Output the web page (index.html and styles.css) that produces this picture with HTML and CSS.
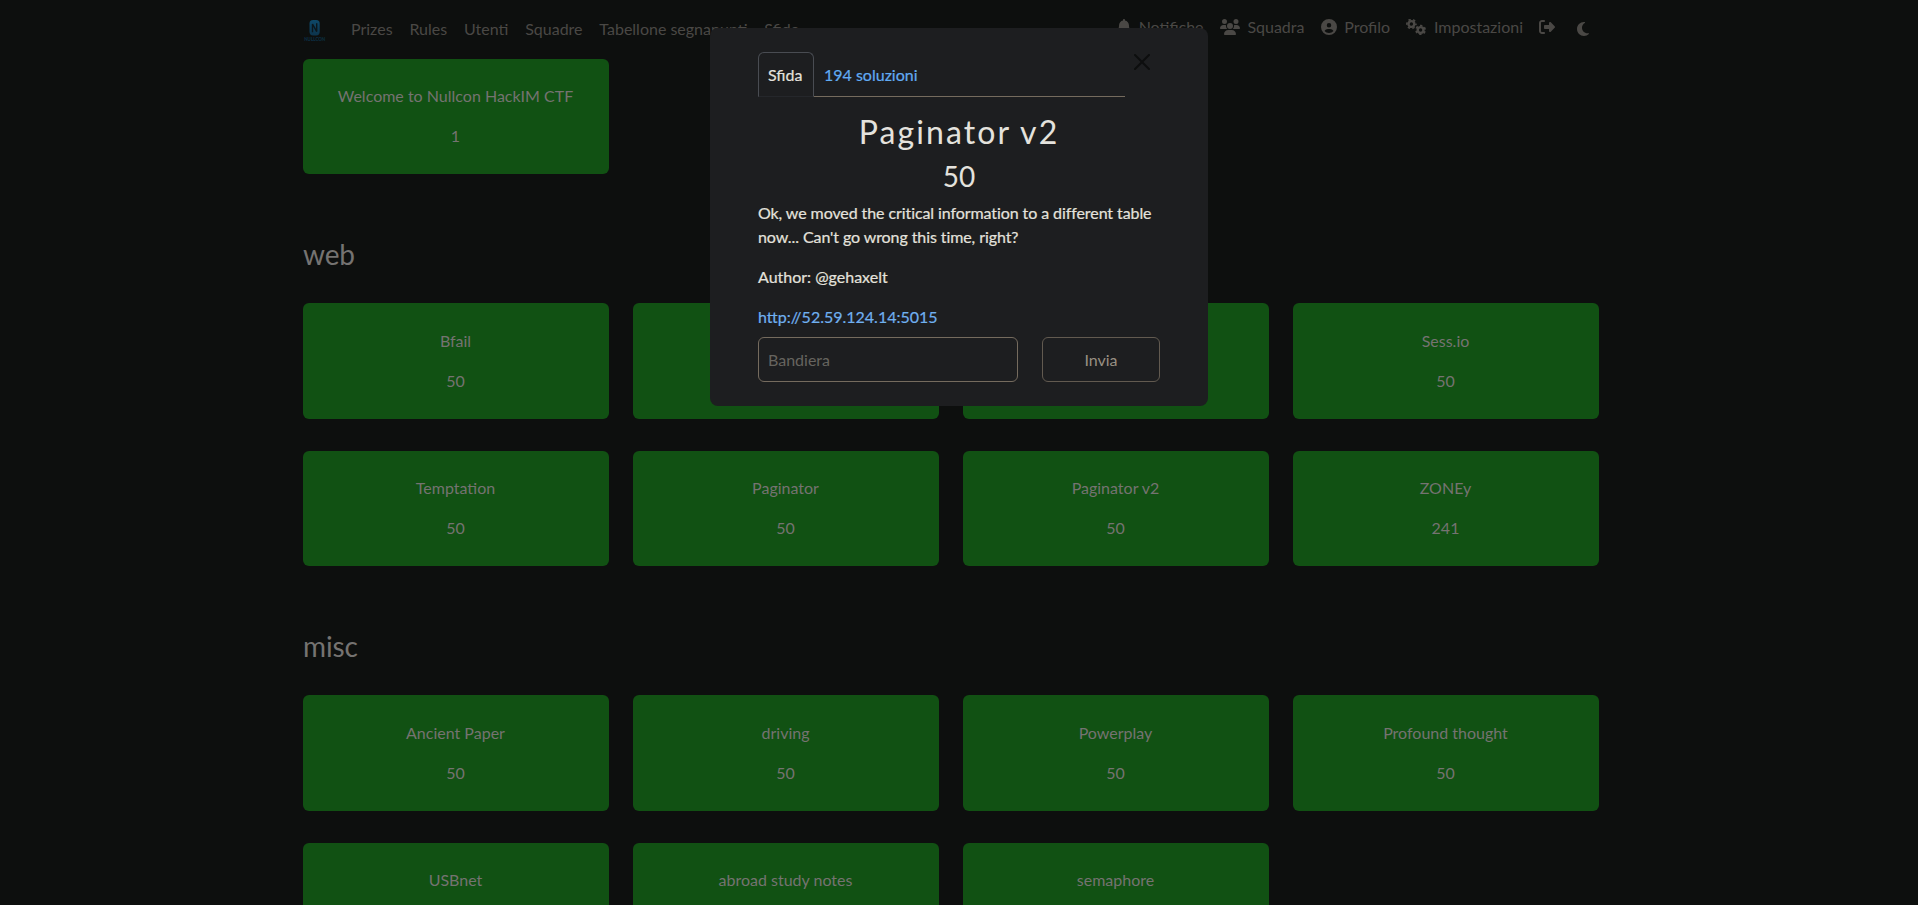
FILE: index.html
```html
<!DOCTYPE html>
<html lang="it">
<head>
<meta charset="utf-8">
<title>Sfide</title>
<link rel="stylesheet" href="styles.css">
</head>
<body>
<nav class="navbar">
  <svg class="logo" viewBox="0 0 24 24">
    <defs><linearGradient id="blue" x1="0" y1="0" x2="0" y2="1"><stop offset="0" stop-color="#0e4868"/><stop offset="1" stop-color="#0d344c"/></linearGradient></defs>
    <rect x="6.500" y="1" width="10.200" height="15.400" rx="3.600" fill="url(#blue)"/>
    <path d="M9.500 13.200V5L13.700 12.600V4.300" fill="none" stroke="#0c161b" stroke-width="1.400"/>
    <text x="11.700" y="22" text-anchor="middle" textLength="21" lengthAdjust="spacingAndGlyphs" class="logo-text">NULLCON</text>
  </svg>
  <div class="links">
    <a>Prizes</a><a>Rules</a><a>Utenti</a><a>Squadre</a><a>Tabellone segnapunti</a><a>Sfide</a>
  </div>
  <div class="account">
    <a><svg class="bell" viewBox="0 0 448 512"><path d="M224 0c-17.700 0-32 14.300-32 32V51.200C119 66 64 130.600 64 208v18.800c0 47-17.300 92.400-48.500 127.600l-7.400 8.300c-8.400 9.400-10.400 22.900-5.300 34.400S19.400 416 32 416H416c12.600 0 24-7.400 29.200-18.900s3.100-25-5.300-34.400l-7.400-8.300C401.300 319.200 384 273.900 384 226.800V208c0-77.400-55-142-128-156.800V32c0-17.700-14.300-32-32-32z"/></svg>Notifiche</a>
    <a><svg class="wide" viewBox="0 0 640 512"><path d="M144 0a80 80 0 1 1 0 160A80 80 0 1 1 144 0zM512 0a80 80 0 1 1 0 160A80 80 0 1 1 512 0zM0 298.700C0 239.800 47.800 192 106.700 192h42.700c15.900 0 31 3.500 44.600 9.700c-1.300 7.200-1.900 14.700-1.900 22.300c0 38.200 16.800 72.500 43.300 96H21.300C9.600 320 0 310.400 0 298.700zM405.300 320c26-23.500 42.700-57.800 42.700-96c0-7.600-.7-15-1.900-22.300c13.600-6.300 28.700-9.700 44.600-9.700h42.700C592.200 192 640 239.800 640 298.700c0 11.800-9.600 21.300-21.300 21.300H405.300zM224 224a96 96 0 1 1 192 0 96 96 0 1 1 -192 0zM128 485.300C128 411.700 187.700 352 261.300 352H378.700C452.300 352 512 411.700 512 485.300c0 14.700-11.900 26.700-26.700 26.700H154.700c-14.700 0-26.700-11.900-26.700-26.700z"/></svg>Squadra</a>
    <a><svg viewBox="0 0 512 512"><path d="M399 384.200C376.900 345.800 335.400 320 288 320H224c-47.400 0-88.900 25.800-111 64.200c35.200 39.200 86.200 63.800 143 63.800s107.800-24.700 143-63.800zM0 256a256 256 0 1 1 512 0A256 256 0 1 1 0 256zm256 16a72 72 0 1 0 0-144 72 72 0 1 0 0 144z"/></svg>Profilo</a>
    <a><svg class="wide" viewBox="0 0 20 16">
      <g fill="none" stroke="currentColor">
        <circle cx="5.400" cy="5" r="2.900" stroke-width="2.400"/>
        <circle cx="5.400" cy="5" r="4.500" stroke-width="1.700" stroke-dasharray="2.350 2.362" stroke-dashoffset="1.170"/>
        <circle cx="14.600" cy="11" r="2.900" stroke-width="2.400"/>
        <circle cx="14.600" cy="11" r="4.500" stroke-width="1.700" stroke-dasharray="2.350 2.362" stroke-dashoffset="3.500"/>
      </g></svg>Impostazioni</a>
    <a><svg class="exit" viewBox="0 0 512 512"><path d="M377.900 105.900L500.700 228.700c7.200 7.200 11.300 17.100 11.300 27.300s-4.100 20.100-11.300 27.300L377.900 406.100c-6.400 6.400-15 9.900-24 9.900c-18.700 0-33.900-15.200-33.900-33.900l0-62.100-128 0c-17.700 0-32-14.300-32-32l0-64c0-17.700 14.300-32 32-32l128 0 0-62.100c0-18.700 15.200-33.900 33.900-33.900c9 0 17.600 3.600 24 9.900zM160 96L96 96c-17.700 0-32 14.300-32 32l0 256c0 17.700 14.300 32 32 32l64 0c17.700 0 32 14.300 32 32s-14.300 32-32 32l-64 0c-53 0-96-43-96-96L0 128C0 75 43 32 96 32l64 0c17.700 0 32 14.300 32 32s-14.300 32-32 32z"/></svg></a>
    <a><svg class="moon" viewBox="0 0 384 512"><path d="M223.500 32C100 32 0 132.300 0 256S100 480 223.500 480c60.600 0 115.500-24.200 155.800-63.400c5-4.900 6.300-12.500 3.100-18.700s-10.100-9.700-17-8.500c-9.800 1.700-19.800 2.600-30.100 2.600c-96.900 0-175.500-78.800-175.500-176c0-65.800 36-123.100 89.300-153.300c6.100-3.500 9.200-10.500 7.700-17.300s-7.300-11.900-14.300-12.500c-6.300-.5-12.600-.8-19-.8z"/></svg></a>
  </div>
</nav>

<main class="container">
  <section class="category">
    <div class="grid">
      <div class="card"><p>Welcome to Nullcon HackIM CTF</p><p>1</p></div>
    </div>
  </section>
  <section class="category">
    <h3>web</h3>
    <div class="grid">
      <div class="card"><p>Bfail</p><p>50</p></div>
      <div class="card"></div>
      <div class="card"></div>
      <div class="card"><p>Sess.io</p><p>50</p></div>
      <div class="card"><p>Temptation</p><p>50</p></div>
      <div class="card"><p>Paginator</p><p>50</p></div>
      <div class="card"><p>Paginator v2</p><p>50</p></div>
      <div class="card"><p>ZONEy</p><p>241</p></div>
    </div>
  </section>
  <section class="category">
    <h3>misc</h3>
    <div class="grid">
      <div class="card"><p>Ancient Paper</p><p>50</p></div>
      <div class="card"><p>driving</p><p>50</p></div>
      <div class="card"><p>Powerplay</p><p>50</p></div>
      <div class="card"><p>Profound thought</p><p>50</p></div>
      <div class="card"><p>USBnet</p></div>
      <div class="card"><p>abroad study notes</p></div>
      <div class="card"><p>semaphore</p></div>
    </div>
  </section>
</main>

<div class="modal">
  <div class="modal-head">
    <div class="tabs"><a class="tab active">Sfida</a><a class="tab">194 soluzioni</a></div>
    <svg class="close" viewBox="0 0 16 16"><path d="M.293.293a1 1 0 011.414 0L8 6.586 14.293.293a1 1 0 111.414 1.414L9.414 8l6.293 6.293a1 1 0 01-1.414 1.414L8 9.414l-6.293 6.293a1 1 0 01-1.414-1.414L6.586 8 .293 1.707a1 1 0 010-1.414z"/></svg>
  </div>
  <h2>Paginator v2</h2>
  <h3 class="value">50</h3>
  <div class="desc">
    <p class="intro">Ok, we moved the critical information to a different table now... Can't go wrong this time, right?</p>
    <p>Author: @gehaxelt</p>
    <p><a class="link">http://52.59.124.14:5015</a></p>
  </div>
  <div class="submit">
    <div class="field">Bandiera</div>
    <div class="button">Invia</div>
  </div>
</div>
</body>
</html>
```
FILE: styles.css
```css
* { box-sizing: border-box; }
html, body { height: 100%; }
body {
  display: flex;
  flex-direction: column;
  margin: 0;
  overflow: hidden;
  background: #0d0f0e;
  color: #757371;
  font: 16px/24px Lato, sans-serif;
}
p, h2, h3 { margin: 0; font-weight: 400; }

.navbar {
  display: flex;
  flex: none;
  width: 1320px;
  height: 59.100px;
  margin: 0 auto;
  padding: 17px 12px 0 4px;
  color: #4a4845;
}
.logo { width: 24px; height: 24px; margin-top: 2px; }
.logo-text { font: 900 4.800px Lato, sans-serif; fill: #0c3044; }
.links { display: flex; gap: 16.800px; margin-left: 24px; white-space: nowrap; }
.account { display: flex; margin: -2px 0 0 auto; padding-right: 17px; }
.account a { display: flex; align-items: center; height: 24px; margin-left: 16.300px; }
.account a:nth-last-child(-n+2) { margin-left: 15.500px; }
.account svg { width: 16px; height: 16px; margin-right: 7.500px; fill: currentColor; }
.account .bell { width: 14px; }
.account .wide { width: 20px; margin-right: 7.500px; }
.account .exit { margin-right: 0; }
.account .moon { width: 14px; height: 16px; margin: 4px 0 0 6px; }

.container {
  flex: 1;
  min-height: 0;
  width: 1320px;
  margin: 0 auto;
  padding-left: 4px;
  overflow: hidden;
}
.category { margin-bottom: 57.450px; }
.category h3 { height: 71.600px; padding-top: 5px; font-size: 28px; line-height: 34px; letter-spacing: -0.150px; }
.grid { display: grid; grid-template-columns: repeat(4, 306px); gap: 32.350px 24px; }
.card {
  height: 115.250px;
  padding: 25.250px 1px 0 0;
  border-radius: 6px;
  background: #115113;
  text-align: center;
}
.card p + p { margin-top: 16px; }

.modal {
  position: absolute;
  left: 710px;
  top: 28px;
  width: 498px;
  height: 378px;
  padding: 24px 48px;
  border-radius: 8px;
  background: #1d1e20;
  color: #e4e2dd;
}
.modal-head { display: flex; align-items: flex-start; }
.tabs { display: flex; width: 367px; height: 45px; border-bottom: 1px solid #756b5e; }
.tab { height: 45px; padding: 11px 10px 0; color: #61abf3; }
.tab.active {
  width: 56px;
  padding: 10px 9px 0;
  border: 1px solid #494c52;
  border-bottom-color: #25272b;
  border-radius: 6px 6px 0 0;
  background: #1d1e20;
  color: #e4e2dd;
}
.tab, .desc { -webkit-text-stroke: 0.200px currentColor; }
.close { width: 16px; height: 16px; margin: 2px 0 0 9px; fill: #0d0e0e; }
.modal h2 { margin-top: 16px; font-size: 32px; line-height: 38px; letter-spacing: 2.100px; text-align: center; }
.value { margin-top: 8px; font-size: 28px; line-height: 34px; text-align: center; }
.desc { margin-top: 8px; }
.desc p { margin-bottom: 16px; }
.intro { letter-spacing: -0.085px; }
.link { color: #70b0f0; }
.submit { display: flex; gap: 24px; margin-top: -8px; }
.field, .button { height: 45px; padding: 10px 9px; border: 1px solid #756b5e; border-radius: 6px; }
.field { width: 260px; color: #66645f; }
.button { width: 118px; border-color: #625a50; color: #989083; text-align: center; }
```
